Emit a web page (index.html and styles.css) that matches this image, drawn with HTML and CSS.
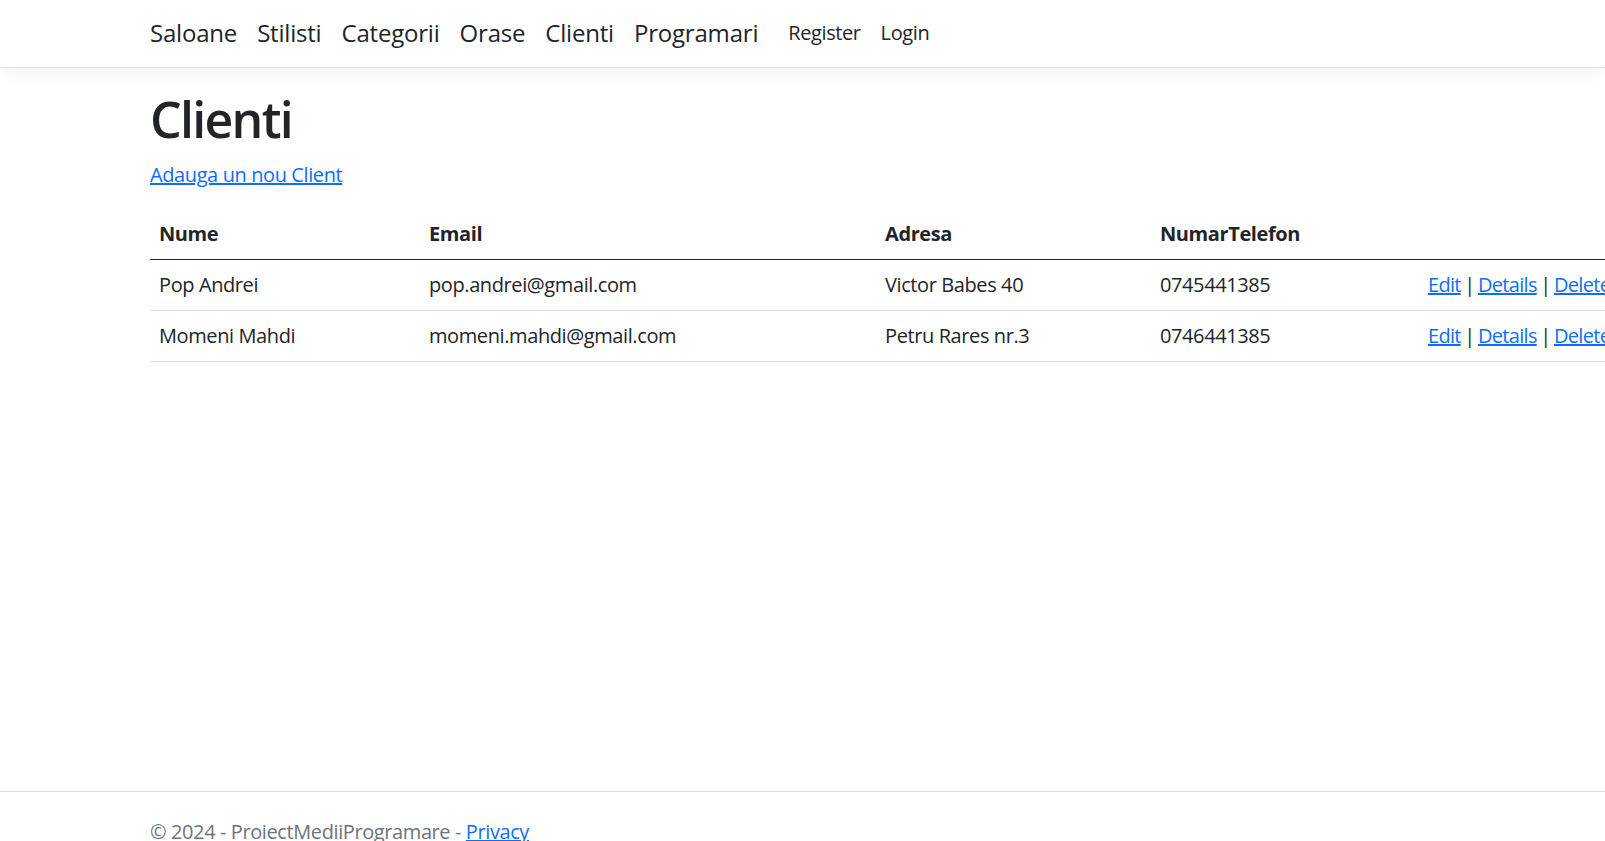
FILE: index.html
```html
<!DOCTYPE html>
<html lang="ro">
<head>
<meta charset="utf-8">
<title>Clienti - ProiectMediiProgramare</title>
<link rel="stylesheet" href="styles.css">
</head>
<body>
<div class="page">
  <header class="navbar">
    <div class="container nav-row">
      <ul class="nav-main">
        <li><a href="#">Saloane</a></li>
        <li><a href="#">Stilisti</a></li>
        <li><a href="#">Categorii</a></li>
        <li><a href="#">Orase</a></li>
        <li><a href="#">Clienti</a></li>
        <li><a href="#">Programari</a></li>
      </ul>
      <ul class="nav-account">
        <li><a href="#">Register</a></li>
        <li><a href="#">Login</a></li>
      </ul>
    </div>
  </header>
  <main class="container main">
    <h1 class="title">Clienti</h1>
    <p class="create"><a href="#">Adauga un nou Client</a></p>
    <table class="table">
      <thead>
        <tr>
          <th class="c-name">Nume</th>
          <th class="c-email">Email</th>
          <th class="c-addr">Adresa</th>
          <th class="c-phone">NumarTelefon</th>
          <th class="c-act"></th>
        </tr>
      </thead>
      <tbody>
        <tr>
          <td>Pop Andrei</td>
          <td>pop.andrei@gmail.com</td>
          <td>Victor Babes 40</td>
          <td>0745441385</td>
          <td class="actions"><a href="#">Edit</a> | <a href="#">Details</a> | <a href="#">Delete</a></td>
        </tr>
        <tr>
          <td>Momeni Mahdi</td>
          <td>momeni.mahdi@gmail.com</td>
          <td>Petru Rares nr.3</td>
          <td>0746441385</td>
          <td class="actions"><a href="#">Edit</a> | <a href="#">Details</a> | <a href="#">Delete</a></td>
        </tr>
      </tbody>
    </table>
  </main>
  <footer class="footer">
    <div class="container">&copy; 2024 - ProiectMediiProgramare - <a href="#">Privacy</a></div>
  </footer>
</div>
</body>
</html>
```

FILE: styles.css
```css
html, body {
  margin: 0;
  padding: 0;
  overflow: hidden;
  background: #fff;
}
body {
  font-family: "Open Sans", "Noto Sans", "Liberation Sans", sans-serif;
  font-size: 20px;
  line-height: 1.5;
  color: #212529;
  letter-spacing: -0.4px;
}
a { color: #0d6efd; }
.page {
  display: flex;
  flex-direction: column;
  height: 872px;
  width: 1605px;
}
.container {
  padding-left: 150px;
}
.navbar {
  height: 67px;
  border-bottom: 1px solid #dee2e6;
  box-shadow: 0 5px 15px rgba(0, 0, 0, 0.05);
  display: flex;
  align-items: center;
  flex-shrink: 0;
}
.nav-row {
  display: flex;
  align-items: center;
  gap: 10px;
  margin-top: -2px;
}
.nav-main, .nav-account {
  list-style: none;
  margin: 0;
  padding: 0;
  display: flex;
  align-items: center;
}
.nav-main a, .nav-account a {
  color: #212529;
  text-decoration: none;
  display: block;
}
.nav-main a {
  font-size: 24px;
  letter-spacing: -0.2px;
  padding: 0 10px;
}
.nav-main li:first-child a { padding-left: 0; }
.nav-account a {
  font-size: 20px;
  padding: 0 10px;
}
.main {
  flex: 1;
  padding-top: 21px;
}
.title {
  font-size: 50px;
  font-weight: 600;
  line-height: 1.2;
  margin: 0 0 11px;
  letter-spacing: -1.7px;
}
.create {
  margin: 0 0 19px;
}
.table {
  border-collapse: collapse;
  width: 1560px;
}
.table th, .table td {
  text-align: left;
  padding: 10px 9px;
  border-bottom: 1px solid #dee2e6;
  vertical-align: top;
}
.table th {
  font-weight: 700;
  border-bottom: 1px solid #212529;
}
.actions {
  letter-spacing: -0.7px;
  word-spacing: -1px;
}
.c-name { width: 252px; }
.c-email { width: 438px; }
.c-addr { width: 257px; }
.c-phone { width: 250px; }
.footer {
  flex-shrink: 0;
  height: 80px;
  line-height: 80px;
  border-top: 1px solid #dee2e6;
  color: #6c757d;
  white-space: nowrap;
}
```
